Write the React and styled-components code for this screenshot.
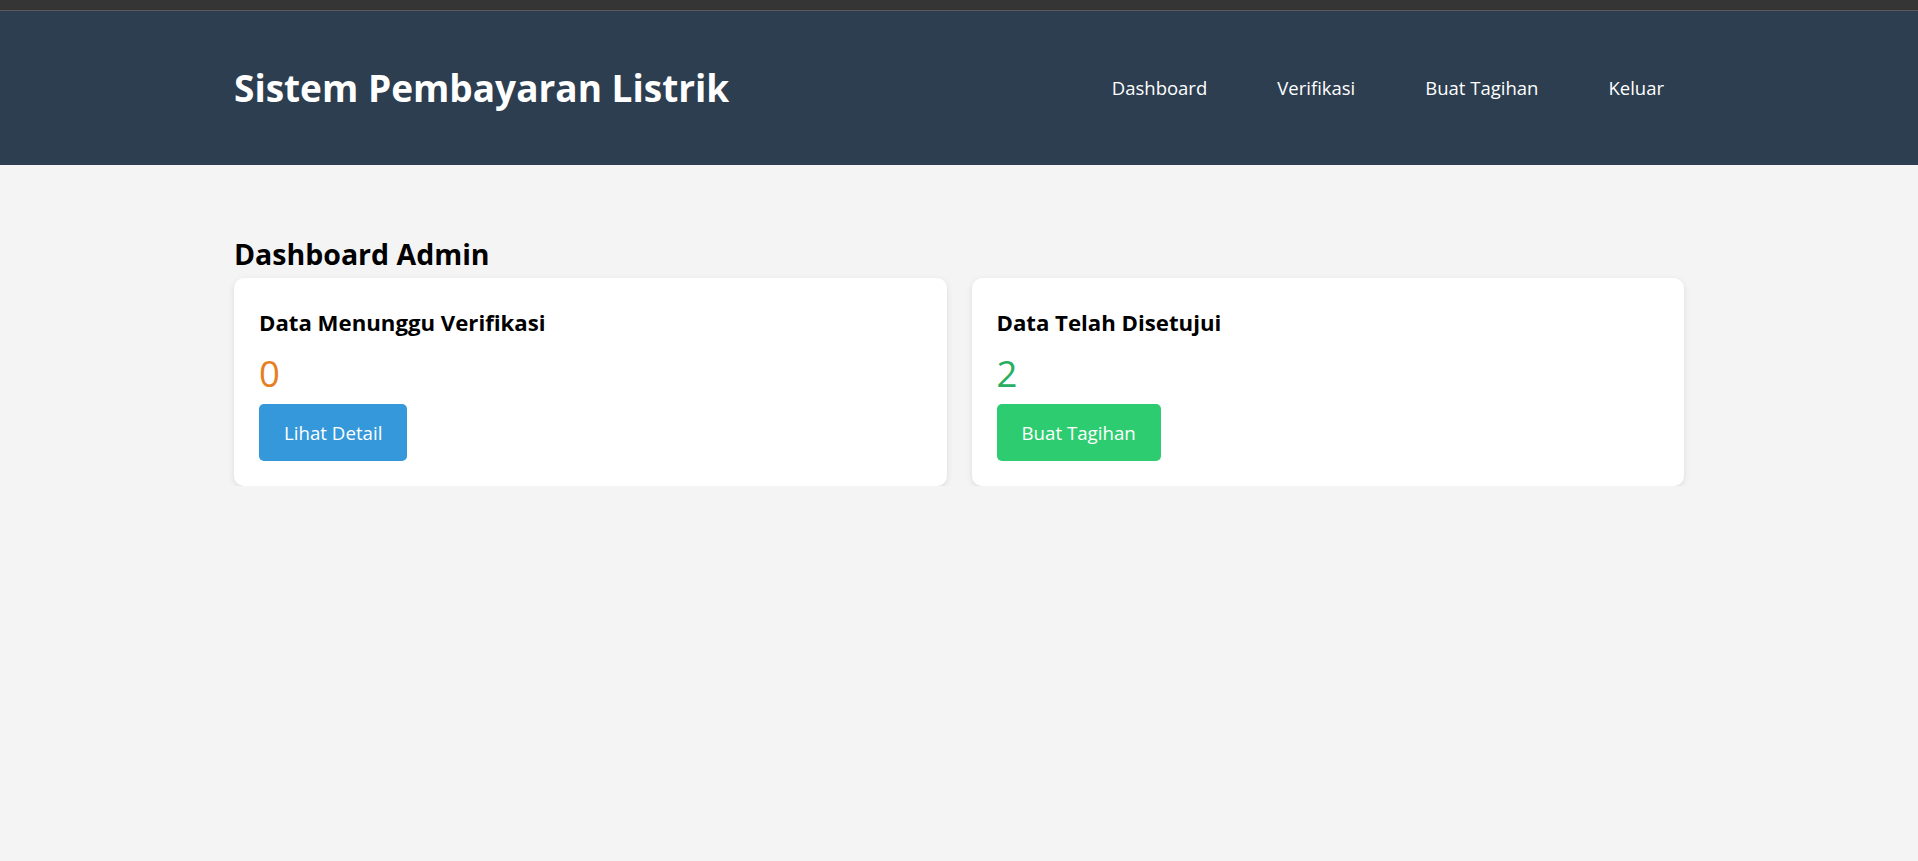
import styled, { createGlobalStyle } from "styled-components";

const GlobalStyle = createGlobalStyle`
  * {
    box-sizing: border-box;
  }

  body {
    margin: 0;
    background: #f4f4f4;
    font-family: "Open Sans", "Noto Sans", sans-serif;
    color: #000;
  }
`;

const stats = [
  { title: "Data Menunggu Verifikasi", value: 0, tone: "#e67e22", action: "Lihat Detail", variant: "#3498db" },
  { title: "Data Telah Disetujui", value: 2, tone: "#27ae60", action: "Buat Tagihan", variant: "#2ecc71" },
];

const links = ["Dashboard", "Verifikasi", "Buat Tagihan", "Keluar"];

const App = () => {
  return (
    <>
      <GlobalStyle />
      <BrowserStrip />
      <Header>
        <Container>
          <HeaderRow>
            <Brand>Sistem Pembayaran Listrik</Brand>
            <Nav>
              {links.map((link) => (
                <NavLink key={link} href="#">
                  {link}
                </NavLink>
              ))}
            </Nav>
          </HeaderRow>
        </Container>
      </Header>
      <Main>
        <Container>
          <PageTitle>Dashboard Admin</PageTitle>
          <CardGrid>
            {stats.map((s) => (
              <Card key={s.title}>
                <CardTitle>{s.title}</CardTitle>
                <Count $tone={s.tone}>{s.value}</Count>
                <Button $bg={s.variant}>{s.action}</Button>
              </Card>
            ))}
          </CardGrid>
        </Container>
      </Main>
    </>
  );
};

export default App;

const BrowserStrip = styled.div`
  height: 11px;
  background: #353535;
  border-bottom: 1px solid #5b5b5b;
`;

const Header = styled.header`
  background: #2c3e50;
  color: #fff;
`;

const Container = styled.div`
  width: 1450px;
  margin: 0 auto;
`;

const HeaderRow = styled.div`
  height: 154px;
  display: flex;
  align-items: center;
  justify-content: space-between;
`;

const Brand = styled.h1`
  margin: 0;
  font-size: 37px;
  font-weight: 700;
  line-height: 52px;
`;

const Nav = styled.nav`
  display: flex;
  align-items: center;
  gap: 30px;
`;

const NavLink = styled.a`
  padding: 10px 20px;
  color: #fff;
  text-decoration: none;
  font-size: 18.5px;
  line-height: 26px;
`;

const Main = styled.main`
  padding-top: 69px;
`;

const PageTitle = styled.h2`
  margin: 0 0 4px;
  font-size: 28.5px;
  font-weight: 700;
  line-height: 40px;
`;

const CardGrid = styled.div`
  display: grid;
  grid-template-columns: 1fr 1fr;
  gap: 25px;
`;

const Card = styled.div`
  background: #fff;
  border-radius: 10px;
  padding: 29px 25px 25px;
  box-shadow: 0 2px 6px rgba(0, 0, 0, 0.1);
`;

const CardTitle = styled.h3`
  margin: 0 0 10px;
  font-size: 22.2px;
  font-weight: 700;
  line-height: 31px;
`;

const Count = styled.div`
  margin-bottom: 6px;
  font-size: 36.5px;
  line-height: 50px;
  color: ${(p) => p.$tone};
`;

const Button = styled.button`
  height: 57px;
  padding: 0 25px;
  border: none;
  border-radius: 5px;
  background: ${(p) => p.$bg};
  color: #fff;
  font-family: inherit;
  font-size: 18.7px;
  cursor: pointer;
`;
